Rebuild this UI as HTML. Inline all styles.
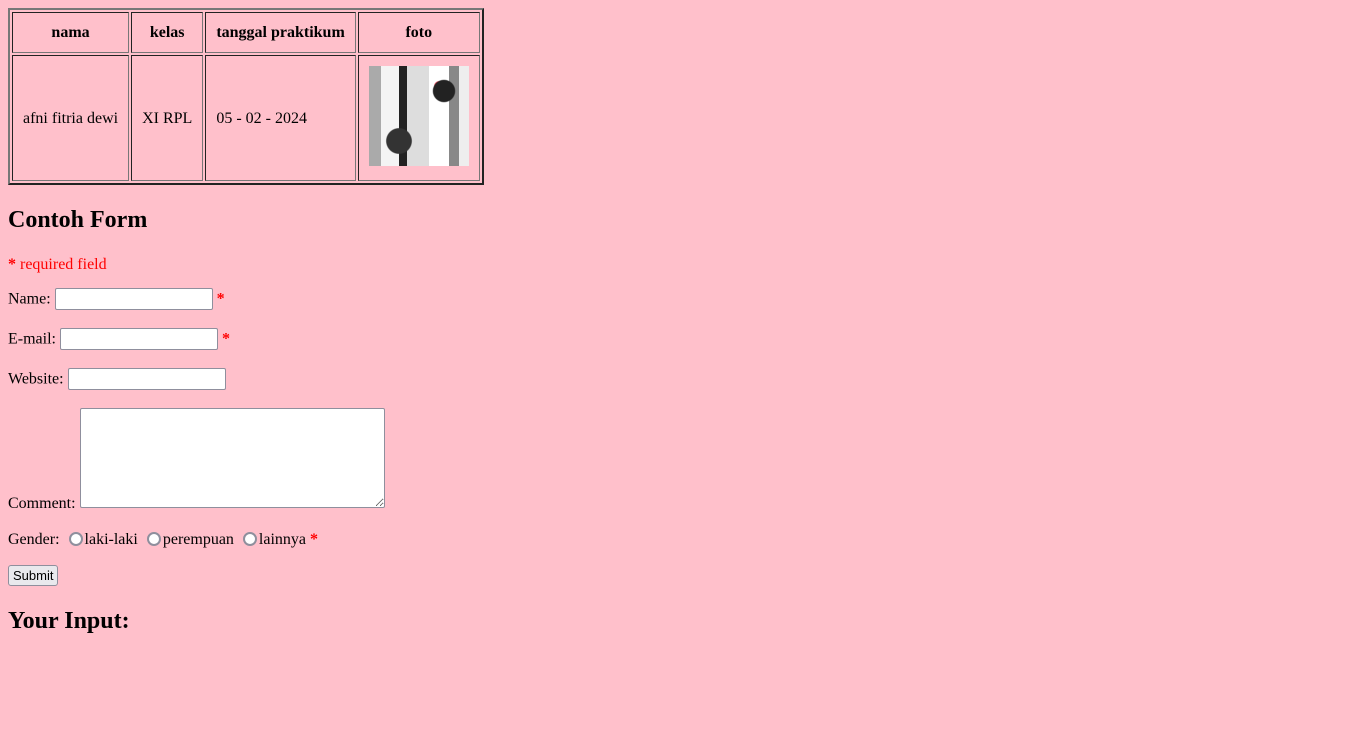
<!DOCTYPE html>
<html><head><style>
body{background:pink;margin:8px;font-family:"Liberation Serif",serif;font-size:16px;color:#000}
table{border:2px outset #777;border-spacing:2px}
td,th{border:1px inset #777;padding:10px}
th{padding:11px 10px 10px}
td{padding:10px 10px 9px}
h2{font-size:24px;margin:22px 0 22px}
h2.last{margin-top:20px}
p{margin:22px 0 14px}
.error{color:#f00}
input[type=text]{width:152px;height:18px;border:1px solid #8f8f9d;border-radius:2px;padding:1px 2px;font-size:13px;vertical-align:baseline;margin:0}
textarea{width:299px;height:94px;border:1px solid #8f8f9d;border-radius:2px;padding:2px;vertical-align:baseline;resize:both;margin:0}
input[type=radio]{appearance:none;-webkit-appearance:none;margin:0 2px 0 5px;width:14px;height:14px;border:2px solid #8f8f9d;border-radius:50%;background:#fff;vertical-align:-2px;box-sizing:border-box}
button{font-family:"Liberation Sans",sans-serif;font-size:13px;padding:2px 4px;border:1px solid #8f8f9d;border-radius:3px;background:#e9e9ed;margin:0;position:relative;top:-2px}
.img{width:100px;height:100px;display:inline-block;vertical-align:baseline;background:
radial-gradient(circle at 75% 25%,#222 0 10%,transparent 11%),
radial-gradient(circle at 30% 75%,#333 0 12%,transparent 13%),
radial-gradient(circle at 70% 20%,#e45 0 4%,transparent 5%),
linear-gradient(90deg,#aaa 0 12%,#f4f4f4 12% 30%,#222 30% 38%,#ddd 38% 60%,#fff 60% 80%,#888 80% 90%,#eee 90%)}
</style></head><body>
<table>
<tr><th>nama</th><th>kelas</th><th>tanggal praktikum</th><th>foto</th></tr>
<tr><td>afni fitria dewi</td><td>XI RPL</td><td>05 - 02 - 2024</td><td><span class="img"></span></td></tr>
</table>
<h2>Contoh Form</h2>
<p class="error"><b>*</b> required field</p>
<form>
Name: <input type="text"> <span class="error"><b>*</b></span><br><br>
E-mail: <input type="text"> <span class="error"><b>*</b></span><br><br>
Website: <input type="text"><br><br>
Comment: <textarea></textarea><br><br>
Gender: <input type="radio">laki-laki <input type="radio">perempuan <input type="radio">lainnya <span class="error"><b>*</b></span><br><br>
<button type="button">Submit</button>
</form>
<h2 class="last">Your Input:</h2>
</body></html>
